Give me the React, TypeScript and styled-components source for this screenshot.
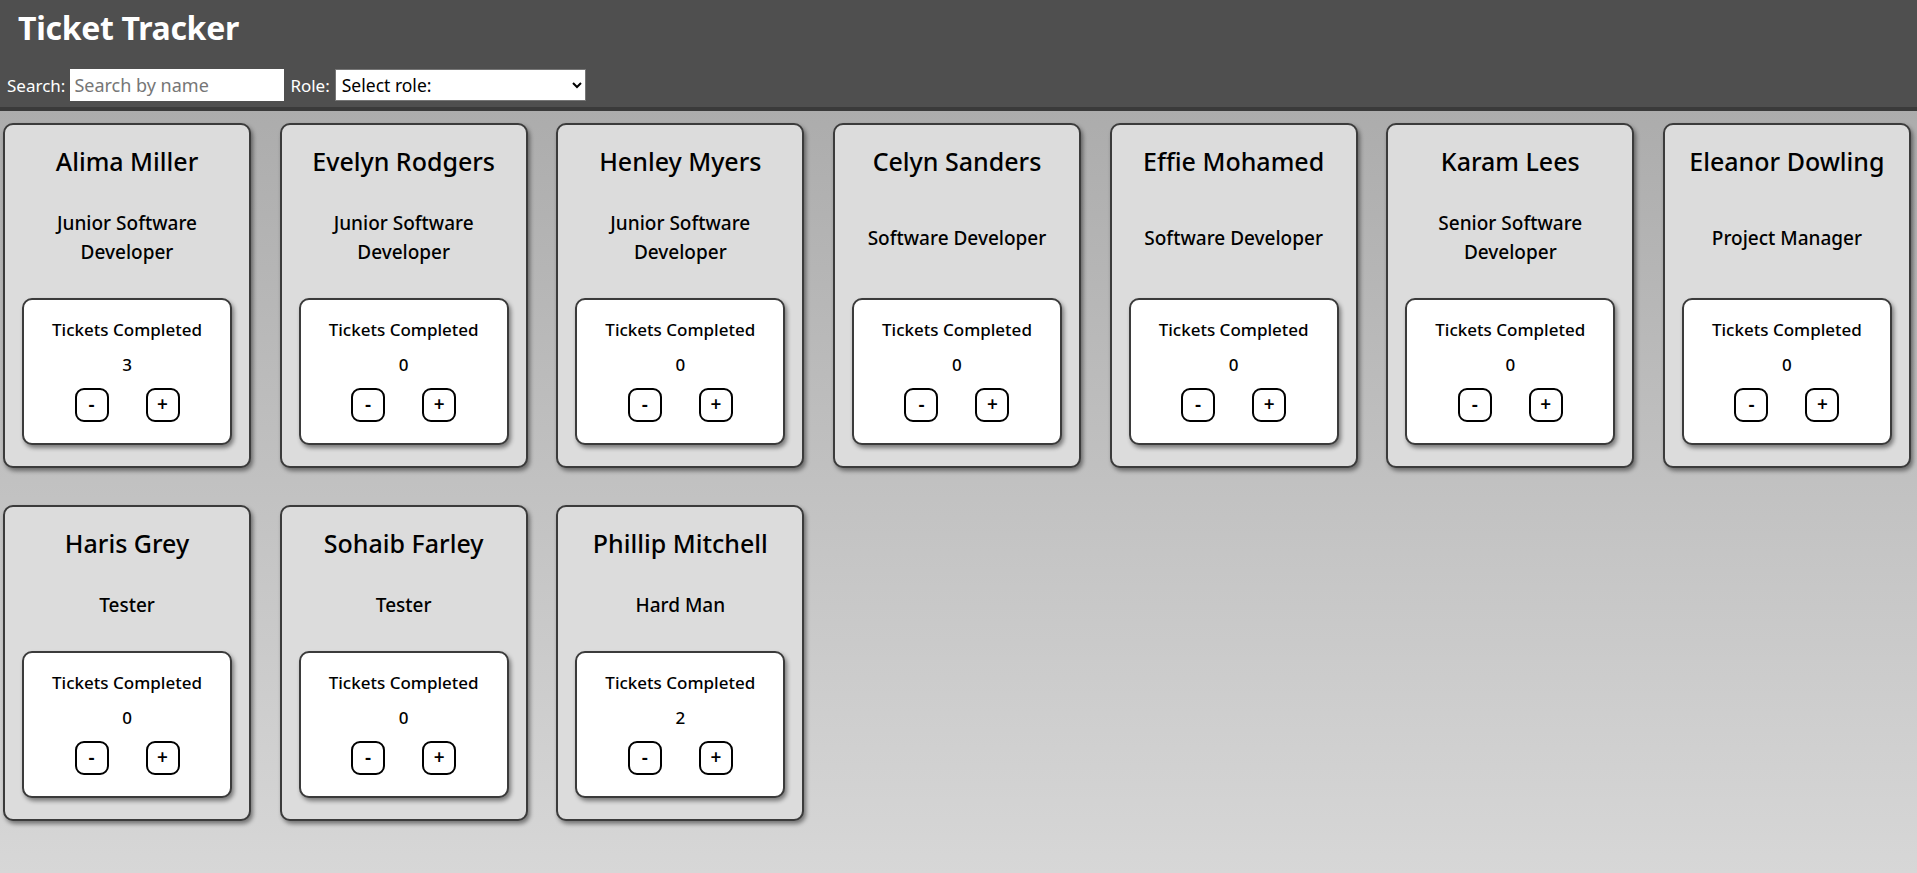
import React, { useState } from "react";
import styled, { createGlobalStyle } from "styled-components";

type Person = {
  name: string;
  role: string;
  tickets: number;
};

const people: Person[] = [
  { name: "Alima Miller", role: "Junior Software Developer", tickets: 3 },
  { name: "Evelyn Rodgers", role: "Junior Software Developer", tickets: 0 },
  { name: "Henley Myers", role: "Junior Software Developer", tickets: 0 },
  { name: "Celyn Sanders", role: "Software Developer", tickets: 0 },
  { name: "Effie Mohamed", role: "Software Developer", tickets: 0 },
  { name: "Karam Lees", role: "Senior Software Developer", tickets: 0 },
  { name: "Eleanor Dowling", role: "Project Manager", tickets: 0 },
  { name: "Haris Grey", role: "Tester", tickets: 0 },
  { name: "Sohaib Farley", role: "Tester", tickets: 0 },
  { name: "Phillip Mitchell", role: "Hard Man", tickets: 2 },
];

const roles = [
  "Junior Software Developer",
  "Software Developer",
  "Senior Software Developer",
  "Project Manager",
  "Tester",
  "Hard Man",
];

const GlobalStyle = createGlobalStyle`
  html, body {
    margin: 0;
    padding: 0;
  }

  body {
    min-height: 100vh;
    font-family: "Noto Sans", "Open Sans", sans-serif;
    color: #000;
    background: linear-gradient(#a6a6a6, #d7d7d7) fixed;
  }
`;

const App: React.FC = (): JSX.Element => {
  const [counts, setCounts] = useState<number[]>(people.map((p) => p.tickets));
  const [search, setSearch] = useState<string>("");
  const [role, setRole] = useState<string>("");

  const change = (index: number, by: number) => {
    setCounts((prev) =>
      prev.map((c, i) => (i === index ? Math.max(0, c + by) : c))
    );
  };

  return (
    <>
      <GlobalStyle />
      <Header>
        <Title>Ticket Tracker</Title>
        <Filters>
          <FilterLabel htmlFor="search">Search:</FilterLabel>
          <SearchInput
            id="search"
            type="text"
            placeholder="Search by name"
            value={search}
            onChange={(e) => setSearch(e.target.value)}
          />
          <FilterLabel htmlFor="role">Role:</FilterLabel>
          <RoleSelect
            id="role"
            value={role}
            onChange={(e) => setRole(e.target.value)}
          >
            <option value="">Select role:</option>
            {roles.map((r) => (
              <option key={r} value={r}>
                {r}
              </option>
            ))}
          </RoleSelect>
        </Filters>
      </Header>
      <CardGrid>
        {people.map((person, i) => (
          <Card key={person.name}>
            <Name>{person.name}</Name>
            <RoleText>
              <span>{person.role}</span>
            </RoleText>
            <TicketBox>
              <TicketLabel>Tickets Completed</TicketLabel>
              <TicketCount>{counts[i]}</TicketCount>
              <ButtonRow>
                <CountButton onClick={() => change(i, -1)}>-</CountButton>
                <CountButton onClick={() => change(i, 1)}>+</CountButton>
              </ButtonRow>
            </TicketBox>
          </Card>
        ))}
      </CardGrid>
    </>
  );
};

export default App;

const Header = styled.header`
  box-sizing: border-box;
  height: 111px;
  background-color: #4f4f4f;
  border-bottom: 4px solid #3a3a3a;
  padding: 8px 0 0 7px;
  display: flex;
  flex-direction: column;
  row-gap: 21px;
`;

const Title = styled.h1`
  margin: 0 0 0 11px;
  color: #fff;
  font-size: 32px;
  font-weight: 700;
  line-height: 40px;
  letter-spacing: -0.3px;
`;

const Filters = styled.div`
  display: flex;
  align-items: center;
`;

const FilterLabel = styled.label`
  color: #fff;
  font-size: 17px;
  margin-right: 5px;
`;

const SearchInput = styled.input`
  box-sizing: border-box;
  width: 214px;
  height: 32px;
  border: none;
  outline: none;
  padding: 0 4px;
  margin-right: 6px;
  font-family: inherit;
  font-size: 18px;
  background: #fff;

  &::placeholder {
    color: #767676;
  }
`;

const RoleSelect = styled.select`
  box-sizing: border-box;
  width: 251px;
  height: 32px;
  border: 1px solid #767676;
  outline: none;
  padding: 0 2px;
  font-family: inherit;
  font-size: 17.5px;
  color: #000;
  background: #fff;
`;

const CardGrid = styled.main`
  display: grid;
  grid-template-columns: repeat(7, 248px);
  justify-content: space-between;
  row-gap: 37px;
  padding: 12px 6px 20px 3px;
`;

const Card = styled.section`
  box-sizing: border-box;
  width: 248px;
  display: flex;
  flex-direction: column;
  align-items: stretch;
  padding: 18px 17px 21px;
  background-color: #dcdcdc;
  border: 2px solid #3b3b3b;
  border-radius: 10px;
  box-shadow: 2px 3px 4px rgba(0, 0, 0, 0.45);
`;

const Name = styled.h2`
  margin: 0;
  text-align: center;
  font-size: 25px;
  font-weight: 500;
  line-height: 36px;
  white-space: nowrap;
`;

const RoleText = styled.p`
  flex: 1;
  margin: 30px 0 31px;
  display: flex;
  align-items: center;
  justify-content: center;
  text-align: center;
  font-size: 19px;
  font-weight: 500;
  line-height: 29px;
  padding: 0 12px;
`;

const TicketBox = styled.div`
  box-sizing: border-box;
  height: 147px;
  display: flex;
  flex-direction: column;
  align-items: center;
  padding-top: 18px;
  background-color: #fff;
  border: 2px solid #3b3b3b;
  border-radius: 10px;
  box-shadow: 2px 3px 4px rgba(0, 0, 0, 0.45);
`;

const TicketLabel = styled.span`
  font-size: 17px;
  font-weight: 500;
  line-height: 24px;
`;

const TicketCount = styled.span`
  margin-top: 11px;
  font-size: 17px;
  font-weight: 500;
  line-height: 24px;
`;

const ButtonRow = styled.div`
  display: flex;
  column-gap: 37px;
  margin-top: 11px;
`;

const CountButton = styled.button`
  box-sizing: border-box;
  width: 34px;
  height: 34px;
  display: flex;
  align-items: center;
  justify-content: center;
  padding: 0 0 2px;
  background-color: #fff;
  color: #000;
  border: 2px solid #000;
  border-radius: 9px;
  font-family: inherit;
  font-size: 19px;
  font-weight: 600;
  cursor: pointer;
`;
